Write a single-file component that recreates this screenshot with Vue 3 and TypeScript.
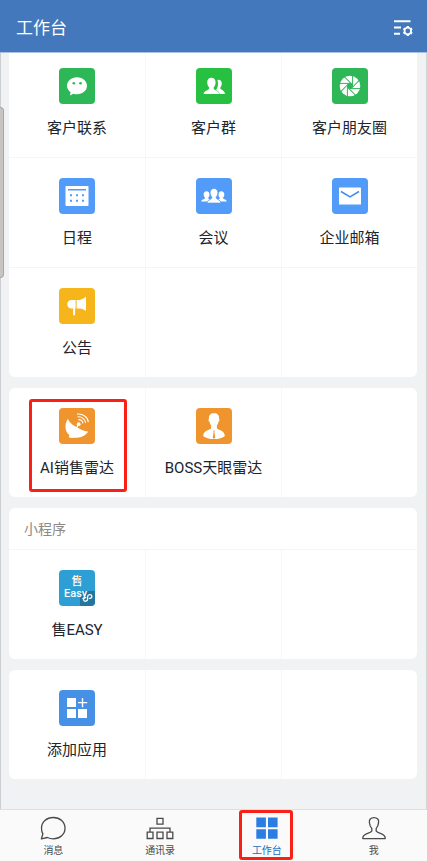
<script setup lang="ts">
type IconName =
  | 'chat'
  | 'group'
  | 'moments'
  | 'calendar'
  | 'meeting'
  | 'mail'
  | 'notice'
  | 'radar'
  | 'boss'
  | 'easy'
  | 'add'

interface AppItem {
  label: string
  icon: IconName
  marked?: boolean
}

interface Section {
  title?: string
  rows: (AppItem | null)[][]
}

interface Tab {
  label: string
  icon: 'message' | 'contacts' | 'workbench' | 'me'
  active?: boolean
}

const sections: Section[] = [
  {
    rows: [
      [
        { label: '客户联系', icon: 'chat' },
        { label: '客户群', icon: 'group' },
        { label: '客户朋友圈', icon: 'moments' },
      ],
      [
        { label: '日程', icon: 'calendar' },
        { label: '会议', icon: 'meeting' },
        { label: '企业邮箱', icon: 'mail' },
      ],
      [{ label: '公告', icon: 'notice' }, null, null],
    ],
  },
  {
    rows: [
      [
        { label: 'AI销售雷达', icon: 'radar', marked: true },
        { label: 'BOSS天眼雷达', icon: 'boss' },
        null,
      ],
    ],
  },
  { title: '小程序', rows: [[{ label: '售EASY', icon: 'easy' }, null, null]] },
  { rows: [[{ label: '添加应用', icon: 'add' }, null, null]] },
]

const tabs: Tab[] = [
  { label: '消息', icon: 'message' },
  { label: '通讯录', icon: 'contacts' },
  { label: '工作台', icon: 'workbench', active: true },
  { label: '我', icon: 'me' },
]

const blades = [0, 45, 90, 135, 180, 225, 270, 315]
</script>

<template>
  <div class="page">
    <header class="topbar">
      <h1>工作台</h1>
      <button type="button" class="settings" aria-label="设置">
        <svg viewBox="0 0 20 18" width="20" height="18" aria-hidden="true">
          <path d="M1 2.2h16.5M1 8.6h7M1 14.8h6" fill="none" stroke="#fff" stroke-width="2" />
          <circle cx="14.8" cy="12" r="3.3" fill="none" stroke="#fff" stroke-width="1.8" />
          <path
            d="M14.8 7v1.6M14.8 15.4V17M10.5 9.5l1.4.8M17.7 13.7l1.4.8M10.5 14.5l1.4-.8M17.7 10.3l1.4-.8"
            stroke="#fff"
            stroke-width="2.2"
          />
        </svg>
      </button>
    </header>

    <main class="content">
      <section v-for="(section, s) in sections" :key="s" class="card">
        <h2 v-if="section.title">{{ section.title }}</h2>
        <div v-for="(row, r) in section.rows" :key="r" class="row">
          <div v-for="(item, c) in row" :key="c" class="cell">
            <button v-if="item" type="button" class="app" :class="{ marked: item.marked }">
              <svg class="icon" :class="item.icon" viewBox="0 0 36 36" aria-hidden="true">
                <g v-if="item.icon === 'chat'">
                  <path
                    d="M18 9.2c5.7 0 10 3.7 10 8.6s-4.3 8.5-10 8.5c-1.3 0-2.5-.1-3.6-.5L11 27.4l.6-3.2C9.4 22.7 8 20.4 8 17.8c0-4.9 4.3-8.6 10-8.6z"
                    fill="#fff"
                  />
                  <circle cx="14.8" cy="15.3" r="1.3" fill="#2eb757" />
                  <circle cx="21.5" cy="15.3" r="1.3" fill="#2eb757" />
                </g>
                <g v-else-if="item.icon === 'group'" fill="#fff">
                  <path
                    d="M21.5 12c2.4-.6 4.3 1 4.3 3.5 0 1.7-.7 3-1.5 3.9v1.2c.4 1.2 4.4 1.7 4.7 5.4h-5.3c-.6-2.2-2-3.2-3.7-4 1.6-2.1 2.7-5.5 1.5-10z"
                  />
                  <path
                    d="M15.4 9.8c2.7 0 4.2 2 4.2 4.6 0 2.1-.8 3.8-1.9 4.9v1.4c.6 1.6 5.2 1.7 5.4 5.3H7.7c.2-3.6 4.8-3.7 5.4-5.3v-1.4c-1.1-1.1-1.9-2.8-1.9-4.9 0-2.6 1.5-4.6 4.2-4.6z"
                  />
                </g>
                <g v-else-if="item.icon === 'moments'">
                  <circle cx="18" cy="18" r="10.3" fill="#fff" />
                  <circle cx="18" cy="18" r="3" fill="#2eb757" />
                  <path
                    v-for="angle in blades"
                    :key="angle"
                    d="M20.6 7.500V17.500"
                    :transform="`rotate(${angle} 18 18)`"
                    stroke="#2eb757"
                    stroke-width="1"
                  />
                </g>
                <g v-else-if="item.icon === 'calendar'">
                  <rect x="6.5" y="8" width="23" height="20" rx=".8" fill="#fff" />
                  <path d="M9 11.8h18" stroke="#529bf8" stroke-width="1.4" />
                  <path
                    d="M11 17.3h2m4 0h2m4 0h2M11 22.7h2m4 0h2m4 0h2"
                    stroke="#529bf8"
                    stroke-width="2"
                  />
                </g>
                <g v-else-if="item.icon === 'meeting'" fill="#fff">
                  <path
                    d="M10.6 13.3c1.9 0 2.9 1.3 2.9 3.1 0 1.3-.5 2.4-1.2 3.1v1c.3.8 2.2 1 2.2 3H5.3c.1-2.2 3.1-2 3.6-3v-1c-.7-.7-1.2-1.8-1.2-3.1 0-1.8 1-3.1 2.9-3.1z"
                  />
                  <path
                    d="M25.4 13.3c-1.9 0-2.9 1.3-2.9 3.1 0 1.3.5 2.4 1.2 3.1v1c-.3.8-2.2 1-2.2 3h9.2c-.1-2.2-3.1-2-3.6-3v-1c.7-.7 1.2-1.8 1.2-3.1 0-1.8-1-3.1-2.9-3.1z"
                  />
                  <path
                    d="M18 10.5c2.5 0 3.9 1.8 3.9 4.2 0 1.8-.7 3.3-1.7 4.2v1.2c.5 1.5 4.7 1.6 4.9 5H10.9c.2-3.4 4.4-3.5 4.9-5v-1.2c-1-.9-1.7-2.4-1.7-4.2 0-2.4 1.4-4.2 3.9-4.2z"
                    stroke="#529bf8"
                    stroke-width=".8"
                  />
                </g>
                <g v-else-if="item.icon === 'mail'">
                  <rect x="7" y="9.5" width="22" height="17" rx=".6" fill="#fff" />
                  <path d="M9 13.5l9 5.3 9-5.3" fill="none" stroke="#3d8cf0" stroke-width="1.5" />
                </g>
                <g v-else-if="item.icon === 'notice'" fill="#fff">
                  <path d="M16.6 12v8.4h-.5v6.9h-2v-6.9h-1.6c-2.6 0-4.2-1.7-4.2-4.2s1.6-4.2 4.2-4.2z" />
                  <path d="M17.6 12h2.7c2.6-.5 4.7-1.6 6.7-3.2v14.1c-2-1.5-4.1-2.3-6.7-2.5h-2.7z" />
                </g>
                <g v-else-if="item.icon === 'radar'">
                  <path
                    d="M9 10.8c.8 3 4.5 6.5 8.4 8.2 3.8 2.2 7.8 4.7 11.8 4.5-2.5 4-7 6.300-11.500 6.200-2.600 0-4.700.6-7.700-.1l.3-2.700C5.700 23.800 5.300 16 9 10.800z"
                    fill="#fff"
                  />
                  <circle cx="19.7" cy="16.2" r="1.9" fill="#fff" />
                  <path
                    d="M17.5 20l2.200-4M19.400 11.600c2.300-.1 4.200 1.500 4.500 3.800M18.600 8.800c4.200-.4 7.700 2.400 8 6.100M18 6.100c5.800-.6 10.900 2.900 11.300 8"
                    fill="none"
                    stroke="#fff"
                    stroke-width="1.1"
                  />
                </g>
                <g v-else-if="item.icon === 'boss'">
                  <path
                    d="M18 5.2c3.6 0 5.4 2 5 5.200.8.7.6 2.500-.4 3.200-.3 1.700-.9 2.900-1.700 3.800v3.200c2.800 1.900 7.400 2.300 8 7.300-2.100 2-6.200 3.100-10.900 3.100S9.200 29.900 7.100 27.900c.6-5 5.200-5.400 8-7.300v-3.200c-.8-.9-1.400-2.100-1.700-3.800-1-.7-1.200-2.500-.4-3.200-.4-3.200 1.400-5.200 5-5.200z"
                    fill="#fff"
                  />
                  <path d="M17.3 22.5h1.4l-.3 1.6.8 5.3-1.2 1.7-1.2-1.7.8-5.3z" fill="#f0952e" />
                </g>
                <g v-else-if="item.icon === 'easy'">
                  <text x="18" y="15" class="glyph" text-anchor="middle">售</text>
                  <path d="M19.7 5.5l-1.5 7.8" stroke="#dba44e" stroke-width="1" />
                  <rect x="21" y="21" width="15" height="15" fill="#236f98" fill-opacity=".88" />
                  <text x="5" y="27" class="word">Easy</text>
                  <path
                    d="M26.8 27.6c-2-.1-2.700 1.300-2.100 2.700.7 1.500 3.900 1.200 3.900-1v-2.600c0-2.500 3.600-2.900 4.200-.8.4 1.600-.8 2.700-2.300 2.500"
                    fill="none"
                    stroke="#fff"
                    stroke-width="1.3"
                    stroke-linecap="round"
                  />
                </g>
                <g v-else>
                  <path d="M8 8h9v9H8zM8 19h9v9H8zM19 19h9v9h-9z" fill="#fff" />
                  <path d="M23.5 8v9.2M19 12.6h9.2" stroke="#fff" stroke-width="1.4" />
                </g>
              </svg>
              <span>{{ item.label }}</span>
            </button>
          </div>
        </div>
      </section>
    </main>

    <nav class="tabbar">
      <a v-for="tab in tabs" :key="tab.label" href="#" class="tab" :class="{ active: tab.active }">
        <svg viewBox="0 0 28 26" width="28" height="26" aria-hidden="true">
          <path
            v-if="tab.icon === 'message'"
            d="M14.3 2.5c6.7 0 11.7 4.7 11.7 10.7s-5 10.7-11.7 10.7c-2.2 0-4.2-.5-5.9-1.4l-6 1.3 1.5-5C2.9 17.2 2.5 15.3 2.5 13.2c0-6 5-10.7 11.8-10.7z"
            fill="none"
            stroke="#4a4a4a"
            stroke-width="1.3"
            stroke-linejoin="round"
          />
          <path
            v-else-if="tab.icon === 'contacts'"
            d="M11 3.3h6v5.8h-6zM1.2 17.2h5.8v6.3H1.2zM11 17.2h6v6.3h-6zM21 17.2h5.8v6.3H21zM4 17v-3.8h20V17"
            fill="none"
            stroke="#4a4a4a"
            stroke-width="1.3"
          />
          <path
            v-else-if="tab.icon === 'workbench'"
            d="M3.3 2.6h9.6v9.6H3.3zM15 2.6h9.6v9.6H15zM3.3 14.2h9.6v9.6H3.3zM15 14.2h9.6v9.6H15z"
            fill="#2b7de1"
          />
          <path
            v-else
            d="M14 2.6c3.4 0 5 2.1 4.6 5.1-.3 2.6-1.2 4.4-2.4 5.7v2.7c2.2 2.7 8.7 2.4 9 6.5v1H2.8v-1c.3-4.1 6.8-3.8 9-6.5v-2.7c-1.2-1.3-2.1-3.1-2.4-5.7-.4-3 1.200-5.100 4.600-5.100z"
            fill="none"
            stroke="#4a4a4a"
            stroke-width="1.3"
            stroke-linejoin="round"
          />
        </svg>
        <span>{{ tab.label }}</span>
      </a>
    </nav>
    <div class="scroll-thumb"></div>
  </div>
</template>

<style>
body {
  background: #f1f2f4;
}
</style>

<style scoped>
* {
  box-sizing: border-box;
}

.page {
  position: relative;
  display: flex;
  flex-direction: column;
  min-height: 100vh;
  overflow: hidden;
  background: #f1f2f4;
  box-shadow: inset 1px 0 #ccced1, inset -1px 0 #d4d5d7;
  font-family: Roboto, 'Noto Sans CJK SC', sans-serif;
}

.topbar {
  position: relative;
  z-index: 1;
  display: flex;
  align-items: center;
  justify-content: space-between;
  height: 53px;
  padding: 4px 14px 0 16px;
  border-bottom: 1px solid #a9c2e4;
  background: #4478bd;
  color: #fff;
}

h1 {
  margin: 0;
  font-size: 17px;
  font-weight: 400;
  line-height: 24px;
}

button {
  padding: 0;
  border: 0;
  background: none;
  color: inherit;
  font: inherit;
}

.settings {
  display: flex;
}

.content {
  display: flex;
  flex: 1;
  flex-direction: column;
  gap: 11px;
  margin-top: -5px;
  padding: 0 10px 24px 9px;
}

.card {
  overflow: hidden;
  border-radius: 6px;
  background: #fff;
}

h2 {
  margin: 0;
  padding: 10px 15px 9px;
  border-bottom: 1px solid #f4f5f6;
  color: #8a8a8a;
  font-size: 14px;
  font-weight: 400;
  line-height: 22px;
}

.row {
  display: grid;
  grid-template-columns: repeat(3, 1fr);
}

.row + .row {
  border-top: 1px solid #f4f5f6;
}

.cell {
  min-height: 109px;
}

.cell + .cell {
  border-left: 1px solid #f6f7f8;
}

.app {
  position: relative;
  display: flex;
  flex-direction: column;
  align-items: center;
  gap: 12px;
  width: 100%;
  height: 100%;
  padding-top: 20px;
  color: #20242b;
  font-size: 15px;
  line-height: 24px;
  white-space: nowrap;
}

.marked::after {
  position: absolute;
  inset: 11px 18px 5px 20px;
  border: 3px solid #fb2015;
  border-radius: 3px;
  content: '';
}

.icon {
  width: 36px;
  height: 36px;
  border-radius: 4px;
  background: #529bf8;
}

.chat,
.moments {
  background: #2eb757;
}

.group {
  background: #27c041;
}

.notice {
  background: #f7b51c;
}

.radar,
.boss {
  background: #f0952e;
}

.easy {
  background: #2e9fd5;
}

.add {
  background: #4691e6;
}

.glyph {
  fill: #fff;
  font-size: 11px;
  font-weight: 500;
}

.word {
  fill: #fff;
  font-size: 11px;
  font-weight: 500;
}

.tabbar {
  display: grid;
  grid-template-columns: repeat(4, 1fr);
  height: 52px;
  border-top: 1px solid #dedfe1;
  background: #fafafa;
}

.tab {
  position: relative;
  display: flex;
  flex-direction: column;
  align-items: center;
  gap: 2px;
  padding-top: 5px;
  color: #4a4a4a;
  font-size: 10px;
  line-height: 16px;
  text-decoration: none;
}

.active {
  color: #2469bd;
}

.active::after {
  position: absolute;
  inset: 0 27px 1px 25px;
  border: 3px solid #fb2015;
  border-radius: 3px;
  content: '';
}

.scroll-thumb {
  position: absolute;
  top: 107px;
  left: 0;
  width: 4px;
  height: 171px;
  border: 1px solid #aaa5a2;
  border-left: 0;
  border-radius: 0 4px 4px 0;
  background: #c8c4c1;
}
</style>
